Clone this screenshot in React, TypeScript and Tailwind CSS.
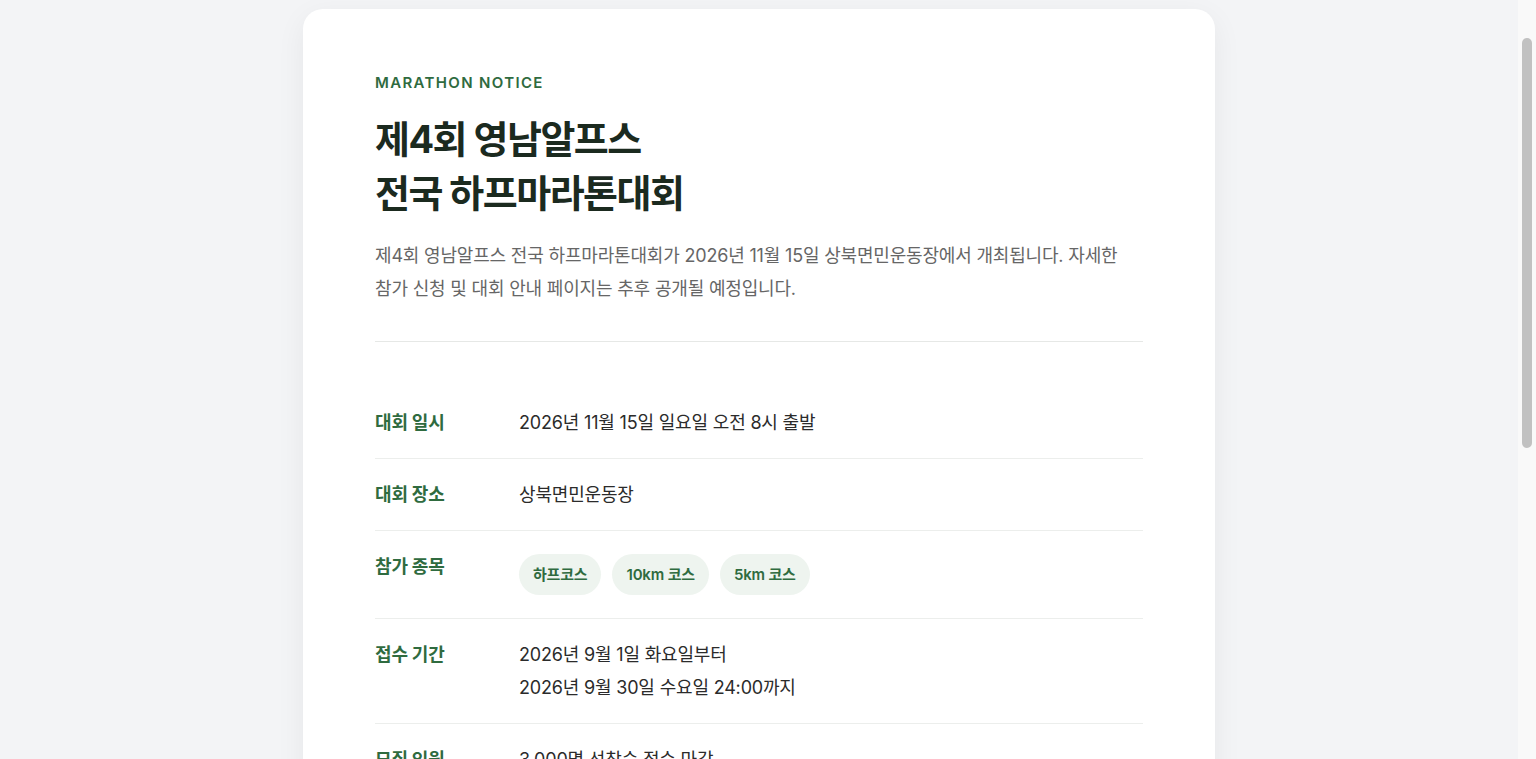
import React from "react";

const font = { fontFamily: 'Inter, "Noto Sans CJK KR", "Noto Sans", sans-serif' };

function Row({ label, children }: { label: string; children: React.ReactNode }) {
  return (
    <div className="grid grid-cols-[144px_1fr] border-b border-[#eceeec] py-[19px]">
      <div className="text-[18px] leading-[33px] font-bold tracking-[-0.01em] text-[#2f6b3f]">{label}</div>
      <div className="text-[18px] leading-[33px] tracking-[-0.01em] text-[#2b2b2b]">{children}</div>
    </div>
  );
}

function Chip({ children }: { children: React.ReactNode }) {
  return (
    <span className="inline-flex h-[41px] items-center rounded-full bg-[#eef4ef] px-[14px] text-[15px] font-semibold text-[#2f6b3f]">
      {children}
    </span>
  );
}

export default function App() {
  return (
    <div className="flex min-h-screen bg-[#f3f4f6]" style={font}>
      <div className="flex-1 pt-[9px] pb-[80px]">
        <div className="mx-auto w-[912px] rounded-[20px] bg-white px-[72px] pt-[62px] pb-[72px] shadow-[0_8px_30px_rgba(0,0,0,0.06)]">
          <div className="border-b border-[#e6e8e6] pb-[36px]">
            <div className="text-[15px] leading-[24px] font-semibold tracking-[0.09em] text-[#2f6b3f]">
              MARATHON NOTICE
            </div>
            <h1 className="mt-[17px] text-[38px] leading-[54px] font-bold tracking-[-0.04em] text-[#1b2a1f]">
              제4회 영남알프스
              <br />
              전국 하프마라톤대회
            </h1>
            <p className="mt-[19px] text-[18px] leading-[33px] tracking-[-0.01em] text-[#666666]">
              제4회 영남알프스 전국 하프마라톤대회가 2026년 11월 15일 상북면민운동장에서 개최됩니다. 자세한
              <br />
              참가 신청 및 대회 안내 페이지는 추후 공개될 예정입니다.
            </p>
          </div>

          <div className="mt-[45px]">
            <Row label="대회 일시">2026년 11월 15일 일요일 오전 8시 출발</Row>
            <Row label="대회 장소">상북면민운동장</Row>
            <Row label="참가 종목">
              <div className="flex flex-wrap gap-[11px] py-[4px]">
                <Chip>하프코스</Chip>
                <Chip>10km 코스</Chip>
                <Chip>5km 코스</Chip>
              </div>
            </Row>
            <Row label="접수 기간">
              2026년 9월 1일 화요일부터
              <br />
              2026년 9월 30일 수요일 24:00까지
            </Row>
            <Row label="모집 인원">3,000명 선착순 접수 마감</Row>
            <Row label="참가 신청">추후 공개 예정</Row>
            <Row label="주최·주관">울주군 · 영남알프스 하프마라톤 조직위원회</Row>
          </div>

          <p className="mt-[40px] text-[15px] leading-[28px] text-[#888888]">
            대회 관련 세부 일정 및 참가비 안내는 공식 홈페이지를 통해 공지될 예정입니다.
          </p>
        </div>
      </div>
      <div className="w-[18px] shrink-0 bg-[#f9f9f9]">
        <div className="ml-[4px] mt-[38px] h-[410px] w-[10px] rounded-full bg-[#c1c1c1]" />
      </div>
    </div>
  );
}
